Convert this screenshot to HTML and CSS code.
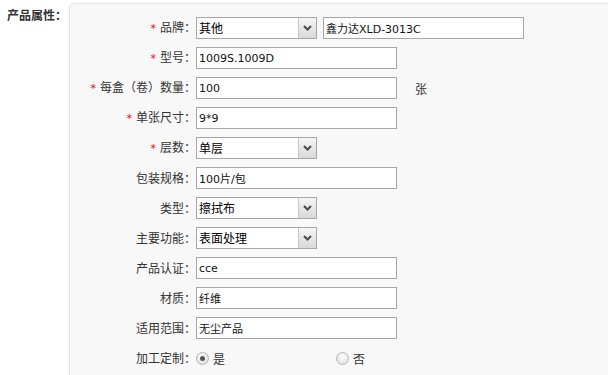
FILE: index.html
```html
<!DOCTYPE html>
<html lang="zh-CN">
<head>
    <meta charset="UTF-8">
    <title>产品属性</title>
    <link rel="stylesheet" href="styles.css">
</head>
<body>
<div class="page">
    <div class="sectionTitle">产品属性：</div>
    <div class="panel">
        <div class="row">
            <div class="label"><span class="req">*</span>品牌：</div>
            <div class="select w120"><span class="val">其他</span><span class="arrow"><svg width="9" height="6" viewBox="0 0 9 6"><path d="M1 1 L4.5 4.5 L8 1" fill="none" stroke="#4a4a4a" stroke-width="2"/></svg></span></div>
            <input class="text ml6" type="text" value="鑫力达XLD-3013C">
        </div>
        <div class="row">
            <div class="label"><span class="req">*</span>型号：</div>
            <input class="text" type="text" value="1009S.1009D">
        </div>
        <div class="row">
            <div class="label"><span class="req">*</span>每盒（卷）数量：</div>
            <input class="text" type="text" value="100">
            <span class="unit">张</span>
        </div>
        <div class="row">
            <div class="label"><span class="req">*</span>单张尺寸：</div>
            <input class="text" type="text" value="9*9">
        </div>
        <div class="row">
            <div class="label"><span class="req">*</span>层数：</div>
            <div class="select w120"><span class="val">单层</span><span class="arrow"><svg width="9" height="6" viewBox="0 0 9 6"><path d="M1 1 L4.5 4.5 L8 1" fill="none" stroke="#4a4a4a" stroke-width="2"/></svg></span></div>
        </div>
        <div class="row">
            <div class="label">包装规格：</div>
            <input class="text" type="text" value="100片/包">
        </div>
        <div class="row">
            <div class="label">类型：</div>
            <div class="select w120"><span class="val">擦拭布</span><span class="arrow"><svg width="9" height="6" viewBox="0 0 9 6"><path d="M1 1 L4.5 4.5 L8 1" fill="none" stroke="#4a4a4a" stroke-width="2"/></svg></span></div>
        </div>
        <div class="row">
            <div class="label">主要功能：</div>
            <div class="select w120"><span class="val">表面处理</span><span class="arrow"><svg width="9" height="6" viewBox="0 0 9 6"><path d="M1 1 L4.5 4.5 L8 1" fill="none" stroke="#4a4a4a" stroke-width="2"/></svg></span></div>
        </div>
        <div class="row">
            <div class="label">产品认证：</div>
            <input class="text" type="text" value="cce">
        </div>
        <div class="row">
            <div class="label">材质：</div>
            <input class="text" type="text" value="纤维">
        </div>
        <div class="row">
            <div class="label">适用范围：</div>
            <input class="text" type="text" value="无尘产品">
        </div>
        <div class="row">
            <div class="label">加工定制：</div>
            <label class="radio"><span class="dot checked"></span>是</label>
            <label class="radio"><span class="dot"></span>否</label>
        </div>
    </div>
</div>
</body>
</html>
```

FILE: styles.css
```css
body {
    margin: 0;
    padding: 0;
    font-family: "Noto Sans CJK SC", "DejaVu Sans", sans-serif;
    font-size: 12px;
    color: #333;
    background: #fff;
    overflow: hidden;
}
.page {
    display: flex;
    align-items: flex-start;
    padding-top: 3px;
    height: 372px;
    overflow: hidden;
}
.sectionTitle {
    flex-shrink: 0;
    width: 62px;
    padding-left: 7px;
    padding-top: 4px;
    font-weight: bold;
    line-height: 16px;
    white-space: nowrap;
    color: #333;
}
.panel {
    flex-shrink: 0;
    width: 600px;
    height: 390px;
    background: #f8f8f8;
    border: 1px solid #e4e4e4;
    border-radius: 4px;
    padding-top: 9px;
}
.row {
    display: flex;
    align-items: center;
    height: 30px;
}
.label {
    width: 126px;
    text-align: right;
    color: #333;
    line-height: 16px;
    white-space: nowrap;
}
.req {
    color: #e00;
    margin-right: 4px;
    font-family: "DejaVu Sans", sans-serif;
    font-size: 11px;
}
.text {
    box-sizing: border-box;
    width: 201px;
    height: 22px;
    border: 1px solid #a6a6a6;
    background: #fff;
    padding: 0 2px;
    margin: 0;
    font-family: "DejaVu Sans", "Noto Sans CJK SC", sans-serif;
    font-size: 11px;
    color: #111;
    outline: none;
}
.ml6 {
    margin-left: 6px;
}
.select {
    box-sizing: border-box;
    display: flex;
    height: 22px;
    border: 1px solid #a6a6a6;
    background: #fff;
}
.w120 {
    width: 121px;
}
.select .val {
    flex: 1;
    padding-left: 2px;
    line-height: 20px;
    color: #000;
}
.select .arrow {
    width: 17px;
    display: flex;
    align-items: center;
    justify-content: center;
    border-left: 1px solid #c8c8c8;
    background: linear-gradient(#f6f6f6, #d9d9d9);
}
.unit {
    margin-left: 18px;
    color: #333;
}
.radio {
    display: flex;
    align-items: center;
    width: 140px;
    color: #333;
}
.dot {
    box-sizing: border-box;
    width: 13px;
    height: 13px;
    border-radius: 50%;
    border: 1px solid #b4b4b4;
    background: radial-gradient(circle at 50% 35%, #fdfdfd, #dcdcdc);
    margin-right: 4px;
    position: relative;
}
.dot.checked::after {
    content: "";
    position: absolute;
    left: 3px;
    top: 3px;
    width: 5px;
    height: 5px;
    border-radius: 50%;
    background: #555;
}
```
